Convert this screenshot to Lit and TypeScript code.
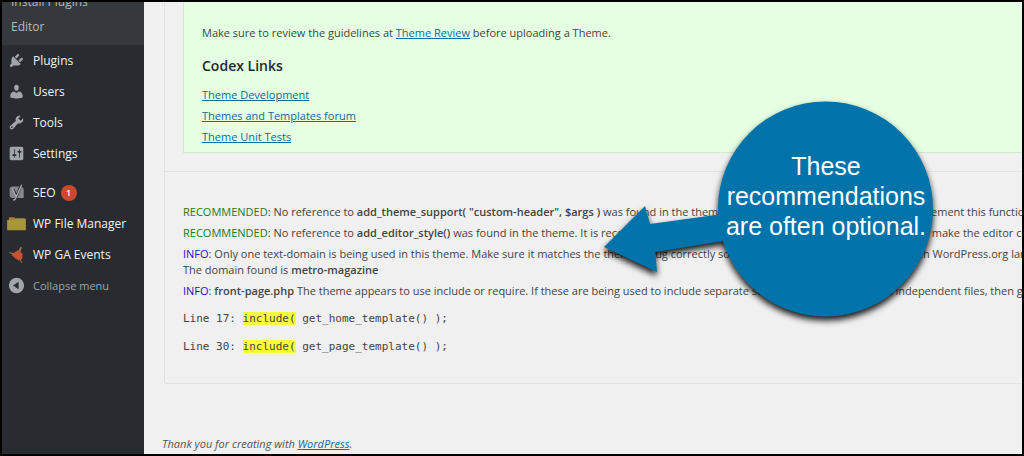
import { LitElement, html, css, svg } from "lit";
import { customElement } from "lit/decorators.js";

const icons: Record<string, unknown> = {
  plugins: svg`<path d="M13.11 4.36L9.87 7.6 8 5.73l3.24-3.24c.35-.34 1.05-.2 1.56.32.52.51.66 1.21.31 1.55zm-8 1.77l.91-1.12 9.01 9.01-1.19.84c-.71.71-2.63 1.16-3.82 1.16H6.14L4.9 17.26c-.59.59-1.54.59-2.12 0-.59-.58-.59-1.53 0-2.12l1.24-1.24v-3.88c0-1.13.4-3.19 1.09-3.89zm7.26 3.97l3.24-3.24c.34-.35 1.04-.21 1.55.31.52.51.66 1.21.31 1.55l-3.24 3.25z"/>`,
  users: svg`<path d="M10 9.25c-2.27 0-2.73-3.44-2.73-3.44C7 4.02 7.82 2 9.97 2c2.16 0 2.98 2.02 2.71 3.81 0 0-.41 3.44-2.68 3.44zm0 2.57L12.72 10c2.39 0 4.52 2.33 4.52 4.53v2.49s-3.65 1.13-7.24 1.13c-3.65 0-7.24-1.13-7.24-1.13v-2.49c0-2.25 1.94-4.48 4.47-4.48z"/>`,
  tools: svg`<path d="M16.68 9.77c-1.34 1.34-3.3 1.67-4.95.99l-5.41 6.52c-.99.99-2.59.99-3.58 0s-.99-2.59 0-3.57l6.52-5.42c-.68-1.65-.35-3.61.99-4.95 1.28-1.28 3.12-1.62 4.72-1.06l-2.89 2.89 2.82 2.82 2.86-2.87c.53 1.58.18 3.39-1.08 4.65zM3.81 16.21c.4.39 1.04.39 1.43 0 .4-.4.4-1.04 0-1.43-.39-.4-1.03-.4-1.43 0-.39.39-.39 1.03 0 1.43z"/>`,
  settings: svg`<path fill-rule="evenodd" d="M18 16V4c0-1.1-.9-2-2-2H4c-1.1 0-2 .9-2 2v12c0 1.1.9 2 2 2h12c1.1 0 2-.9 2-2zM8 11h1c.55 0 1 .45 1 1s-.45 1-1 1H8v1.500c0 .28-.22.5-.5.5s-.5-.22-.5-.5V13H6c-.55 0-1-.45-1-1s.45-1 1-1h1V5.500c0-.28.22-.5.5-.5s.5.22.5.5V11zm5-2h-1c-.55 0-1-.45-1-1s.45-1 1-1h1V5.500c0-.28.22-.5.5-.5s.5.22.5.5V7h1c.55 0 1 .45 1 1s-.45 1-1 1h-1v5.500c0 .28-.22.5-.5.5s-.5-.22-.5-.5V9z"/>`,
  seo: svg`<path fill="#85898d" d="M5 3h8l-3 8-2.500-5H5l3.500 8c.3 1 0 1.500-.5 2.500H5c-1.700 0-3-1.300-3-3V6c0-1.700 1.300-3 3-3zM16 3.500c1.500.3 2.500 1.500 2.500 3v10h-7.500z"/><path fill="none" stroke="#b0b4b8" stroke-width="1.500" d="M5.500 6l4 9M16 1L9.500 16q-1 3-3.500 3"/>`,
  files: svg`<path fill="#b07a35" d="M1 4q0-1.500 1.500-1.500h5L9 4h9q1 0 1 1v3H1z"/><path fill="#a8963c" d="M-1 6h9l2-2h10q1 0 1 1v12q0 1-1 1H0q-1 0-1-1z"/>`,
  events: svg`<path fill="#8c7853" d="M14.500 1l2 .8-2.500 6-2-1zM0 7l8 1.500v3zM13 14l4 5-1.500 1z"/><path fill="#c9512f" d="M5 9l7-4 5 4v6l-4 2-4-2-4-4z"/>`,
  collapse: svg`<path fill-rule="evenodd" d="M10 1a9 9 0 1 0 0 18a9 9 0 1 0 0-18zM12.500 5.500v9L6 10z"/>`,
};

interface Item {
  icon: string;
  label: string;
  badge?: number;
}

const coreItems: Item[] = [
  { icon: "plugins", label: "Plugins" },
  { icon: "users", label: "Users" },
  { icon: "tools", label: "Tools" },
  { icon: "settings", label: "Settings" },
];

const addonItems: Item[] = [
  { icon: "seo", label: "SEO", badge: 1 },
  { icon: "files", label: "WP File Manager" },
  { icon: "events", label: "WP GA Events" },
];

const glyph = (name: string) =>
  html`<svg class="icon" viewBox="0 0 20 20" aria-hidden="true">${icons[name]}</svg>`;

@customElement("admin-menu")
export class AdminMenu extends LitElement {
  static styles = css`
    :host {
      display: block;
      background: #282c30;
      color: #f2f3f4;
      font-size: 12px;
    }
    ul {
      list-style: none;
      margin: 0;
      padding: 0;
    }
    .submenu {
      background: #35393d;
      margin-top: -13px;
      padding-bottom: 6px;
    }
    .submenu a {
      display: block;
      line-height: 25px;
      padding-left: 9px;
      color: #b4b9be;
      text-decoration: none;
    }
    .group + .group {
      margin-top: 8px;
    }
    .item {
      display: flex;
      align-items: center;
      gap: 8px;
      width: 100%;
      height: 31px;
      padding: 0 0 0 6px;
      box-sizing: border-box;
      border: 0;
      background: none;
      color: inherit;
      font: inherit;
      text-decoration: none;
      white-space: nowrap;
    }
    .icon {
      width: 17px;
      height: 17px;
      fill: #a0a5aa;
      overflow: visible;
      flex: none;
    }
    .badge {
      display: grid;
      place-items: center;
      width: 16px;
      height: 16px;
      margin-left: -3px;
      border-radius: 50%;
      background: #ca4a2a;
      color: #fff;
      font-size: 9px;
      font-weight: 600;
    }
    .collapse {
      color: #a0a5aa;
      font-size: 11px;
    }
  `;

  private row(item: Item) {
    return html`<li>
      <a class="item" href="#">
        ${glyph(item.icon)}<span>${item.label}</span>
        ${item.badge ? html`<span class="badge">${item.badge}</span>` : null}
      </a>
    </li>`;
  }

  render() {
    return html`
      <nav>
        <ul class="submenu">
          <li><a href="#">Install Plugins</a></li>
          <li><a href="#">Editor</a></li>
        </ul>
        <ul class="group">${coreItems.map((i) => this.row(i))}</ul>
        <ul class="group">${addonItems.map((i) => this.row(i))}</ul>
        <button class="item collapse" type="button">${glyph("collapse")}<span>Collapse menu</span></button>
      </nav>
    `;
  }
}

@customElement("note-callout")
export class NoteCallout extends LitElement {
  static styles = css`
    :host {
      display: block;
      position: absolute;
      left: 598px;
      top: 95px;
      width: 340px;
      height: 230px;
      pointer-events: none;
    }
    svg {
      display: block;
      fill: #0073aa;
      filter: drop-shadow(0 4px 3px rgba(0, 0, 0, 0.9));
      overflow: visible;
    }
    p {
      position: absolute;
      right: 0;
      top: 54px;
      width: 228px;
      margin: 0;
      color: #fff;
      font: 25px/30px "Liberation Sans", Arial, sans-serif;
      text-align: center;
    }
  `;

  render() {
    return html`
      <svg width="340" height="230" viewBox="0 0 340 230" aria-hidden="true">
        <circle cx="225.500" cy="112" r="107.500" />
        <path d="M4 150L45 109L50 127L130 116V143L55 155L57 175Z" />
      </svg>
      <p>These<br />recommendations<br />are often optional.</p>
    `;
  }
}

@customElement("app-root")
export class AppRoot extends LitElement {
  static styles = css`
    :host {
      display: block;
      position: relative;
      min-height: 100vh;
      box-sizing: border-box;
      border: 2px solid #000;
      overflow: hidden;
      background: #f0f0f0;
      color: #444;
      font: 11px/16px "Open Sans", "Noto Sans", sans-serif;
    }
    .page {
      display: grid;
      grid-template-columns: 142px minmax(0, 1fr);
      min-height: calc(100vh - 4px);
    }
    main {
      padding-left: 18px;
    }
    .panel {
      border: 1px solid #e2e2e2;
      border-width: 0 0 1px 1px;
      margin-left: 2px;
      border-radius: 0 0 0 3px;
    }
    .summary {
      padding: 0 0 18px 18px;
      border-bottom: 1px solid #e2e2e2;
    }
    .guide {
      background: #e4ffe2;
      border: 1px solid #d3e8d2;
      border-width: 0 0 1px 1px;
      padding: 23px 0 7px 18px;
      white-space: nowrap;
    }
    .guide p {
      margin: 0;
    }
    h2 {
      margin: 15px 0 11px;
      font-size: 14px;
      line-height: 20px;
      font-weight: 600;
      color: #23282d;
    }
    .guide ul,
    .results {
      list-style: none;
      margin: 0;
      padding: 0;
      display: grid;
      gap: 5px;
    }
    a {
      color: #0f6a9c;
    }
    .results {
      padding: 32px 0 28px 18px;
      white-space: nowrap;
    }
    .good {
      color: #227a22;
    }
    .info {
      color: #2a0ae0;
    }
    b {
      font-weight: 600;
    }
    pre {
      margin: 0;
      padding-top: 12px;
      font: 11px/16px "DejaVu Sans Mono", monospace;
    }
    mark {
      background: #fbfb3a;
      color: inherit;
    }
    footer {
      padding-top: 52px;
      font-style: italic;
      color: #555;
    }
  `;

  render() {
    return html`
      <div class="page">
        <admin-menu></admin-menu>
        <main>
          <section class="panel">
            <div class="summary">
              <div class="guide">
                <p>Make sure to review the guidelines at <a href="#">Theme Review</a> before uploading a Theme.</p>
                <h2>Codex Links</h2>
                <ul>
                  <li><a href="#">Theme Development</a></li>
                  <li><a href="#">Themes and Templates forum</a></li>
                  <li><a href="#">Theme Unit Tests</a></li>
                </ul>
              </div>
            </div>
            <ul class="results">
              <li><span class="good">RECOMMENDED</span>: No reference to <b>add_theme_support( "custom-header", $args )</b> was found in the theme. It is recommended that the theme implement this functionality if using an image for the header.</li>
              <li><span class="good">RECOMMENDED</span>: No reference to <b>add_editor_style()</b> was found in the theme. It is recommended that the theme implement editor styling, so as to make the editor content match the resulting post output.</li>
              <li><span class="info">INFO</span>: Only one text-domain is being used in this theme. Make sure it matches the theme's slug correctly so that the theme will be compatible with WordPress.org language packs.<br />The domain found is <b>metro-magazine</b></li>
              <li><span class="info">INFO</span>: <b>front-page.php</b> The theme appears to use include or require. If these are being used to include separate sections of a template from independent files, then get_template_part() should be used instead.
                <pre>Line 17: <mark>include(</mark> get_home_template() );</pre>
                <pre>Line 30: <mark>include(</mark> get_page_template() );</pre>
              </li>
            </ul>
          </section>
          <footer>Thank you for creating with <a href="#">WordPress</a>.</footer>
        </main>
      </div>
      <note-callout></note-callout>
    `;
  }
}
